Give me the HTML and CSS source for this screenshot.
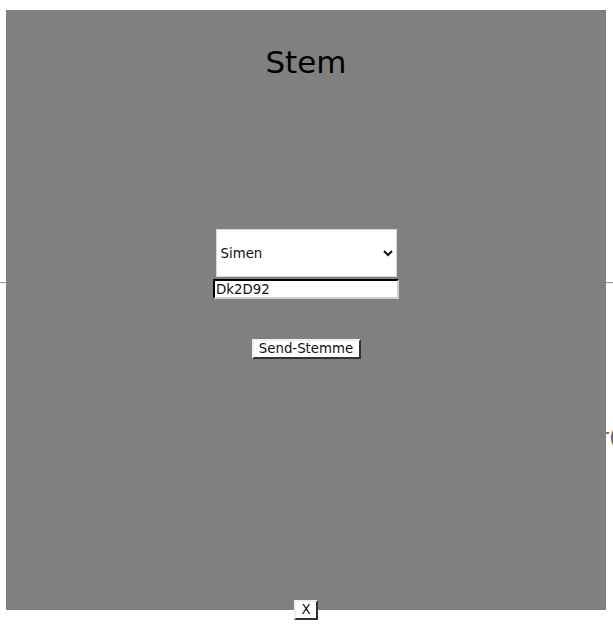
FILE: index.html
```html
<!DOCTYPE html>
<html>
<head>
<meta charset="utf-8">
<link rel="stylesheet" href="styles.css">
</head>
<body>
<div class="page">
  <hr class="rule">
  <p class="behind">r(</p>
</div>
<div class="modal">
  <h1 class="title">Stem</h1>
  <form class="vote">
    <select class="choice">
      <option>Simen</option>
    </select>
    <input class="code" type="text" value="Dk2D92">
    <button class="send" type="button">Send-Stemme</button>
  </form>
  <button class="close" type="button">X</button>
</div>
</body>
</html>
```
FILE: styles.css
```css
html, body {
  margin: 0;
  padding: 0;
  background: #ffffff;
  font-family: "DejaVu Sans", Verdana, sans-serif;
}
.page {
  padding-top: 282px;
}
.rule {
  margin: 0;
  border: 0;
  border-top: 1px solid #9a9a9a;
  border-bottom: 1px solid #eeeeee;
  height: 0;
}
.behind {
  margin: 140px 0 0 600px;
  font-size: 22px;
  color: #666;
  white-space: nowrap;
}
.modal {
  position: fixed;
  left: 6px;
  top: 10px;
  width: 600px;
  height: 600px;
  background: #808080;
  display: flex;
  flex-direction: column;
  align-items: center;
}
.title {
  margin: 34px 0 0;
  font-size: 31px;
  line-height: 37px;
  font-weight: normal;
  color: #000;
}
.vote {
  display: flex;
  flex-direction: column;
  align-items: center;
  margin-top: 148px;
}
.choice {
  box-sizing: border-box;
  width: 181px;
  height: 48px;
  font-family: "DejaVu Sans", Verdana, sans-serif;
  font-size: 13.333px;
  background: #fff;
  border: 1px solid #d8d8d8;
  padding: 0;
  color: #111;
}
.code {
  box-sizing: border-box;
  width: 186px;
  height: 20px;
  margin-top: 2px;
  padding: 0 1px;
  font-family: "DejaVu Sans", Verdana, sans-serif;
  font-size: 13.333px;
  border: 2px inset #767676;
  border-top-color: #1a1a1a;
  border-left-color: #1a1a1a;
  border-right-color: #cfcfcf;
  border-bottom-color: #cfcfcf;
  background: #fff;
  color: #111;
}
.send {
  box-sizing: border-box;
  width: 109px;
  height: 20px;
  margin-top: 40px;
  padding: 0;
  white-space: nowrap;
  font-family: "DejaVu Sans", Verdana, sans-serif;
  font-size: 13.333px;
  line-height: 14px;
  background: #fff;
  color: #111;
  border: 2px solid;
  border-top-color: #f0f0f0;
  border-left-color: #f0f0f0;
  border-right-color: #333;
  border-bottom-color: #333;
}
.close {
  position: absolute;
  left: 288px;
  bottom: -10px;
  box-sizing: border-box;
  width: 24px;
  height: 20px;
  padding: 0;
  font-family: "DejaVu Sans", Verdana, sans-serif;
  font-size: 13.333px;
  line-height: 14px;
  background: #fff;
  color: #111;
  border: 2px solid;
  border-top-color: #f0f0f0;
  border-left-color: #f0f0f0;
  border-right-color: #333;
  border-bottom-color: #333;
}
```
